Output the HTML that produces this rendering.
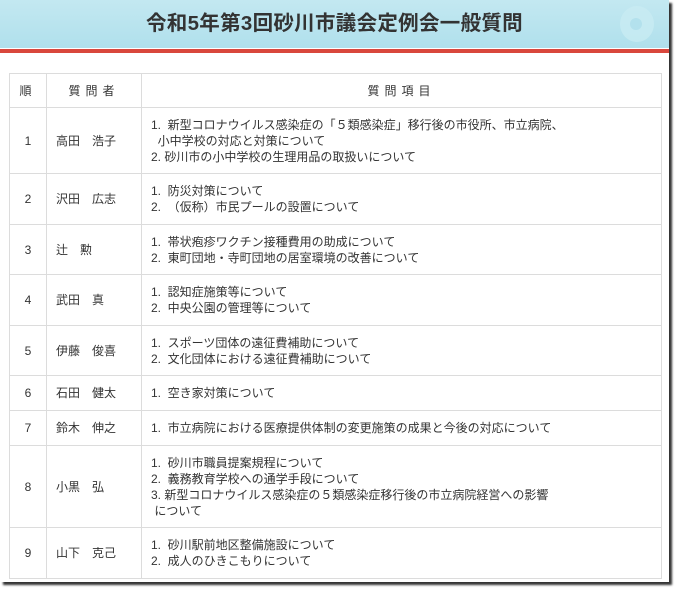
<!DOCTYPE html>
<html><head><meta charset="utf-8"><style>
html,body{margin:0;padding:0;background:#fff;width:676px;height:589px;overflow:hidden;font-family:"Liberation Sans","Noto Sans CJK JP",sans-serif;color:#333}
#wrap{position:absolute;left:0;top:0;width:669px;height:582px;background:#fff;box-shadow:3px 3px 2px #333}
#hd{position:absolute;left:0;top:0;width:669px;height:48px;background:linear-gradient(180deg,#c3e8f1,#b0e0ec);}
#hd h1{margin:0;text-align:center;font-size:20.5px;line-height:48px;font-weight:bold;color:#333;letter-spacing:0.3px}
#red{position:absolute;left:0;top:49px;width:669px;height:4px;background:#d9473c}
#deco{position:absolute;left:620px;top:6px;width:34px;height:36px;border-radius:50%;background:#c9ecf3;opacity:.8}
#deco:after{content:"";position:absolute;left:10px;top:12px;width:12px;height:12px;border-radius:50%;background:#b2e1ed}
table{position:absolute;left:9px;top:73px;width:653px;border-collapse:collapse;font-size:12px;table-layout:fixed}
td{border:1.5px solid #dcdcdc;padding:0 0 0 9px;vertical-align:middle;line-height:16px;box-sizing:border-box}
td.n{text-align:center;padding:0}
th{border:1.5px solid #dcdcdc;font-weight:normal;height:32px;letter-spacing:5px;padding:0;box-sizing:border-box}
</style></head><body>
<div id="wrap">
<div id="hd"><h1>令和5年第3回砂川市議会定例会一般質問</h1><div id="deco"></div></div>
<div id="red"></div>
<table>
<colgroup><col style="width:37px"><col style="width:95px"><col></colgroup>
<tr style="height:34px"><th>順</th><th>質問者</th><th>質問項目</th></tr>
<tr style="height:66px"><td class="n">1</td><td class="m">高田　浩子</td><td>1.&nbsp;&nbsp;新型コロナウイルス感染症の「５類感染症」移行後の市役所、市立病院、<br>&nbsp;&nbsp;小中学校の対応と対策について<br>2. 砂川市の小中学校の生理用品の取扱いについて</td></tr>
<tr style="height:51px"><td class="n">2</td><td class="m">沢田　広志</td><td>1.&nbsp;&nbsp;防災対策について<br>2.&nbsp;&nbsp;（仮称）市民プールの設置について</td></tr>
<tr style="height:50px"><td class="n">3</td><td class="m">辻　勲</td><td>1.&nbsp;&nbsp;帯状疱疹ワクチン接種費用の助成について<br>2.&nbsp;&nbsp;東町団地・寺町団地の居室環境の改善について</td></tr>
<tr style="height:51px"><td class="n">4</td><td class="m">武田　真</td><td>1.&nbsp;&nbsp;認知症施策等について<br>2.&nbsp;&nbsp;中央公園の管理等について</td></tr>
<tr style="height:50px"><td class="n">5</td><td class="m">伊藤　俊喜</td><td>1.&nbsp;&nbsp;スポーツ団体の遠征費補助について<br>2.&nbsp;&nbsp;文化団体における遠征費補助について</td></tr>
<tr style="height:35px"><td class="n">6</td><td class="m">石田　健太</td><td>1.&nbsp;&nbsp;空き家対策について</td></tr>
<tr style="height:35px"><td class="n">7</td><td class="m">鈴木　伸之</td><td>1.&nbsp;&nbsp;市立病院における医療提供体制の変更施策の成果と今後の対応について</td></tr>
<tr style="height:82px"><td class="n">8</td><td class="m">小黒　弘</td><td>1.&nbsp;&nbsp;砂川市職員提案規程について<br>2.&nbsp;&nbsp;義務教育学校への通学手段について<br>3. 新型コロナウイルス感染症の５類感染症移行後の市立病院経営への影響<br>&nbsp;について</td></tr>
<tr style="height:51px"><td class="n">9</td><td class="m">山下　克己</td><td>1.&nbsp;&nbsp;砂川駅前地区整備施設について<br>2.&nbsp;&nbsp;成人のひきこもりについて</td></tr>
</table>
</div>
</body></html>
